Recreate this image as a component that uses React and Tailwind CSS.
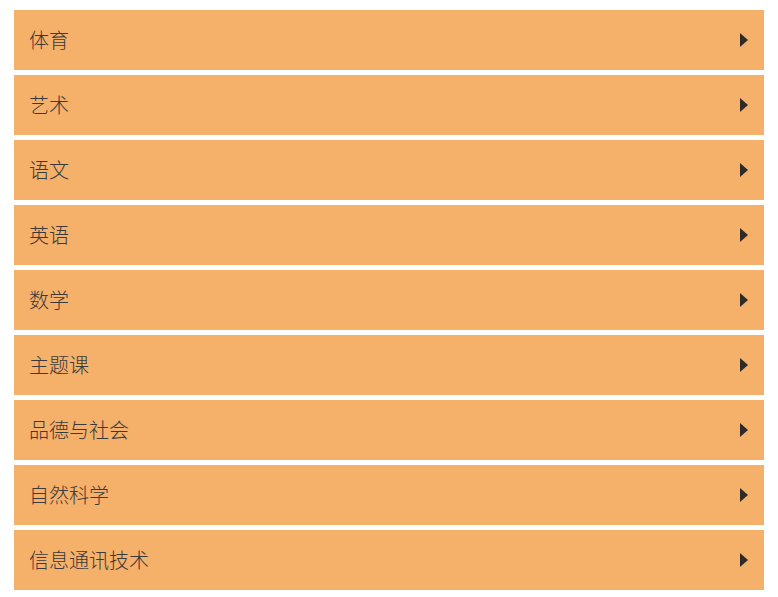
const items = ["体育","艺术","语文","英语","数学","主题课","品德与社会","自然科学","信息通讯技术"];

export default function App() {
  return (
    <div className="w-[778px] h-[597px] bg-white pt-[10px] px-[14px] flex flex-col gap-[5px]">
      {items.map((t) => (
        <div key={t} className="h-[60px] bg-[#f5b06a] flex items-center justify-between pl-[15px] pr-[16px]">
          <span className="text-[20px] font-light text-[#3a3a3a] font-['Noto_Sans_CJK_SC',sans-serif]">{t}</span>
          <svg width="8" height="14" viewBox="0 0 8 14"><path d="M0 0 L8 7 L0 14 Z" fill="#2e2a27"/></svg>
        </div>
      ))}
    </div>
  );
}
